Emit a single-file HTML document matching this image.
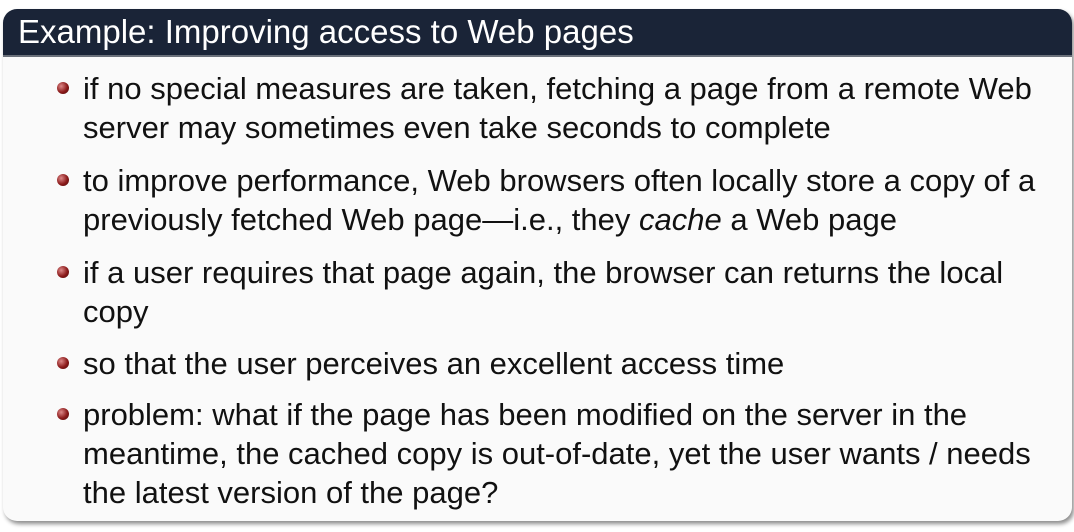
<!DOCTYPE html>
<html><head><meta charset="utf-8"><style>
body{margin:0;width:1074px;height:532px;background:#fff;position:relative;overflow:hidden;font-family:"Liberation Sans",sans-serif}
.box{position:absolute;left:3px;top:9px;width:1069px;height:512px;border-radius:14px;background:#fafafa;box-shadow:2px 3px 4px rgba(0,0,0,.45);overflow:hidden}
.hd{height:46px;background:#1a2437;color:#fff;font-size:33px;line-height:46px;padding-left:15px;border-bottom:2px solid #6a707a}
.l{position:absolute;left:80px;font-size:31px;color:#111;white-space:nowrap;line-height:39px}
.b{position:absolute;left:54px;width:12px;height:12px;border-radius:50%;background:radial-gradient(circle at 35% 35%,#d88,#8b1a1a 55%,#4a0a0a)}
</style></head><body>
<div class="box"><div class="hd">Example: Improving access to Web pages</div>
<div class="b" style="top:73px"></div>
<div class="l" style="top:60px">if no special measures are taken, fetching a page from a remote Web</div>
<div class="l" style="top:99px">server may sometimes even take seconds to complete</div>
<div class="b" style="top:165px"></div>
<div class="l" style="top:152px">to improve performance, Web browsers often locally store a copy of a</div>
<div class="l" style="top:191px">previously fetched Web page—i.e., they <i>cache</i> a Web page</div>
<div class="b" style="top:257px"></div>
<div class="l" style="top:244px">if a user requires that page again, the browser can returns the local</div>
<div class="l" style="top:283px">copy</div>
<div class="b" style="top:348px"></div>
<div class="l" style="top:335px">so that the user perceives an excellent access time</div>
<div class="b" style="top:399px"></div>
<div class="l" style="top:386px">problem: what if the page has been modified on the server in the</div>
<div class="l" style="top:425px">meantime, the cached copy is out-of-date, yet the user wants / needs</div>
<div class="l" style="top:464px">the latest version of the page?</div>
</div>
</body></html>
